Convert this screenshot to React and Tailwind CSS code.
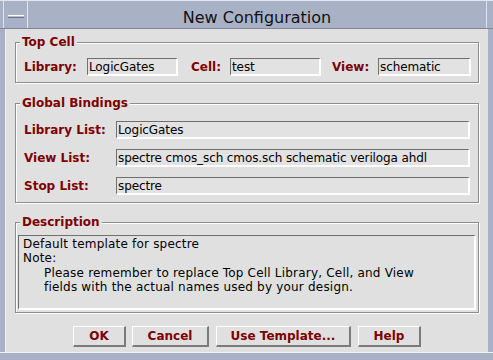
const field = 'h-[18px] flex items-center bg-[#e2e2e2] border-t border-l border-r-2 border-b-2 border-t-[#6f6f6f] border-l-[#6f6f6f] border-r-white border-b-white pl-[1px] text-[12px] tracking-[-0.1px] text-black whitespace-nowrap overflow-hidden';
const label = 'font-bold text-[12px] text-[#7d0000] whitespace-nowrap';
const group = 'border border-[#8c8c8c] shadow-[inset_1px_1px_0_#ffffff,1px_1px_0_#ffffff]';
const legend = 'ml-[4px] px-[2px] bg-[#e0e0e0] leading-[14px] font-bold text-[12px] text-[#7d0000]';
const button = 'h-[21px] flex items-center justify-center bg-[#e0e0e0] border-t border-l border-r-2 border-b-2 border-t-white border-l-white border-r-[#7b7b7b] border-b-[#7b7b7b] font-bold text-[12px] text-[#7d0000]';

function Field({ text, className = '' }) {
  return <div className={`${field} ${className}`}>{text}</div>;
}

export default function App() {
  return (
    <div className="w-[493px] h-[360px] bg-[#a9b1c6] flex flex-col font-['DejaVu_Sans',sans-serif] overflow-hidden">
      {/* title bar */}
      <div className="h-[29px] flex border-t border-t-[#e2e6ef] border-b border-b-[#7f869a]">
        <div className="w-[4px] border-r border-r-[#dfe3ec]" />
        <div className="w-[24px] flex items-center justify-center border-r border-r-[#e6e9f0]">
          <div className="w-[16px] h-[3px] mt-[4px] bg-[#b9c0d2] border-t border-t-white border-b border-b-[#6d7488]" />
        </div>
        <div className="flex-1 flex items-center justify-center pt-[7px] text-[16px] text-[#111]">
          New Configuration
        </div>
        <div className="w-[7px] border-l border-l-[#dfe3ec]" />
      </div>

      {/* dialog body */}
      <div className="flex-1 mx-[5px] bg-[#e0e0e0] flex flex-col px-[9px] border-l border-l-[#f2f2f2]">
        <fieldset className={`${group} mt-[6px]`}>
          <legend className={legend}>Top Cell</legend>
          <div className="flex items-center pl-[8px] pt-[9px] pb-[6px]">
            <span className={`${label} w-[63px]`}>Library:</span>
            <Field text="LogicGates" className="w-[91px]" />
            <span className={`${label} w-[39px] ml-[13px]`}>Cell:</span>
            <Field text="test" className="w-[91px]" />
            <span className={`${label} w-[46px] ml-[11px]`}>View:</span>
            <Field text="schematic" className="w-[93px]" />
          </div>
        </fieldset>

        <fieldset className={`${group} mt-[13px]`}>
          <legend className={legend}>Global Bindings</legend>
          <div className="flex flex-col gap-[10px] px-[8px] pt-[11px] pb-[7px]">
            <div className="flex items-center">
              <span className={`${label} w-[92px]`}>Library List:</span>
              <Field text="LogicGates" className="flex-1" />
            </div>
            <div className="flex items-center">
              <span className={`${label} w-[92px]`}>View List:</span>
              <Field text="spectre cmos_sch cmos.sch schematic veriloga ahdl" className="flex-1" />
            </div>
            <div className="flex items-center">
              <span className={`${label} w-[92px]`}>Stop List:</span>
              <Field text="spectre" className="flex-1" />
            </div>
          </div>
        </fieldset>

        <fieldset className={`${group} mt-[12px]`}>
          <legend className={legend}>Description</legend>
          <div className="px-[2px] pt-[6px] pb-[2px]">
            <div className="h-[75px] bg-[#e0e0e0] border-t border-l border-r-2 border-b-2 border-t-[#6f6f6f] border-l-[#6f6f6f] border-r-white border-b-white pl-[4px] pt-[1px] text-[12px] leading-[14.3px] tracking-[0.2px] text-black">
              <div>Default template for spectre</div>
              <div>Note:</div>
              <div className="pl-[21px]">Please remember to replace Top Cell Library, Cell, and View</div>
              <div className="pl-[21px]">fields with the actual names used by your design.</div>
            </div>
          </div>
        </fieldset>

        <div className="flex justify-center mt-[13px] gap-[6px]">
          <button className={`${button} w-[53px]`}>OK</button>
          <button className={`${button} w-[77px]`}>Cancel</button>
          <button className={`${button} w-[135px] ml-[1px]`}>Use Template...</button>
          <button className={`${button} w-[63px] ml-[1px]`}>Help</button>
        </div>
      </div>

      {/* bottom frame */}
      <div className="h-[8px] border-t border-t-[#f0f2f6]" />
    </div>
  );
}
